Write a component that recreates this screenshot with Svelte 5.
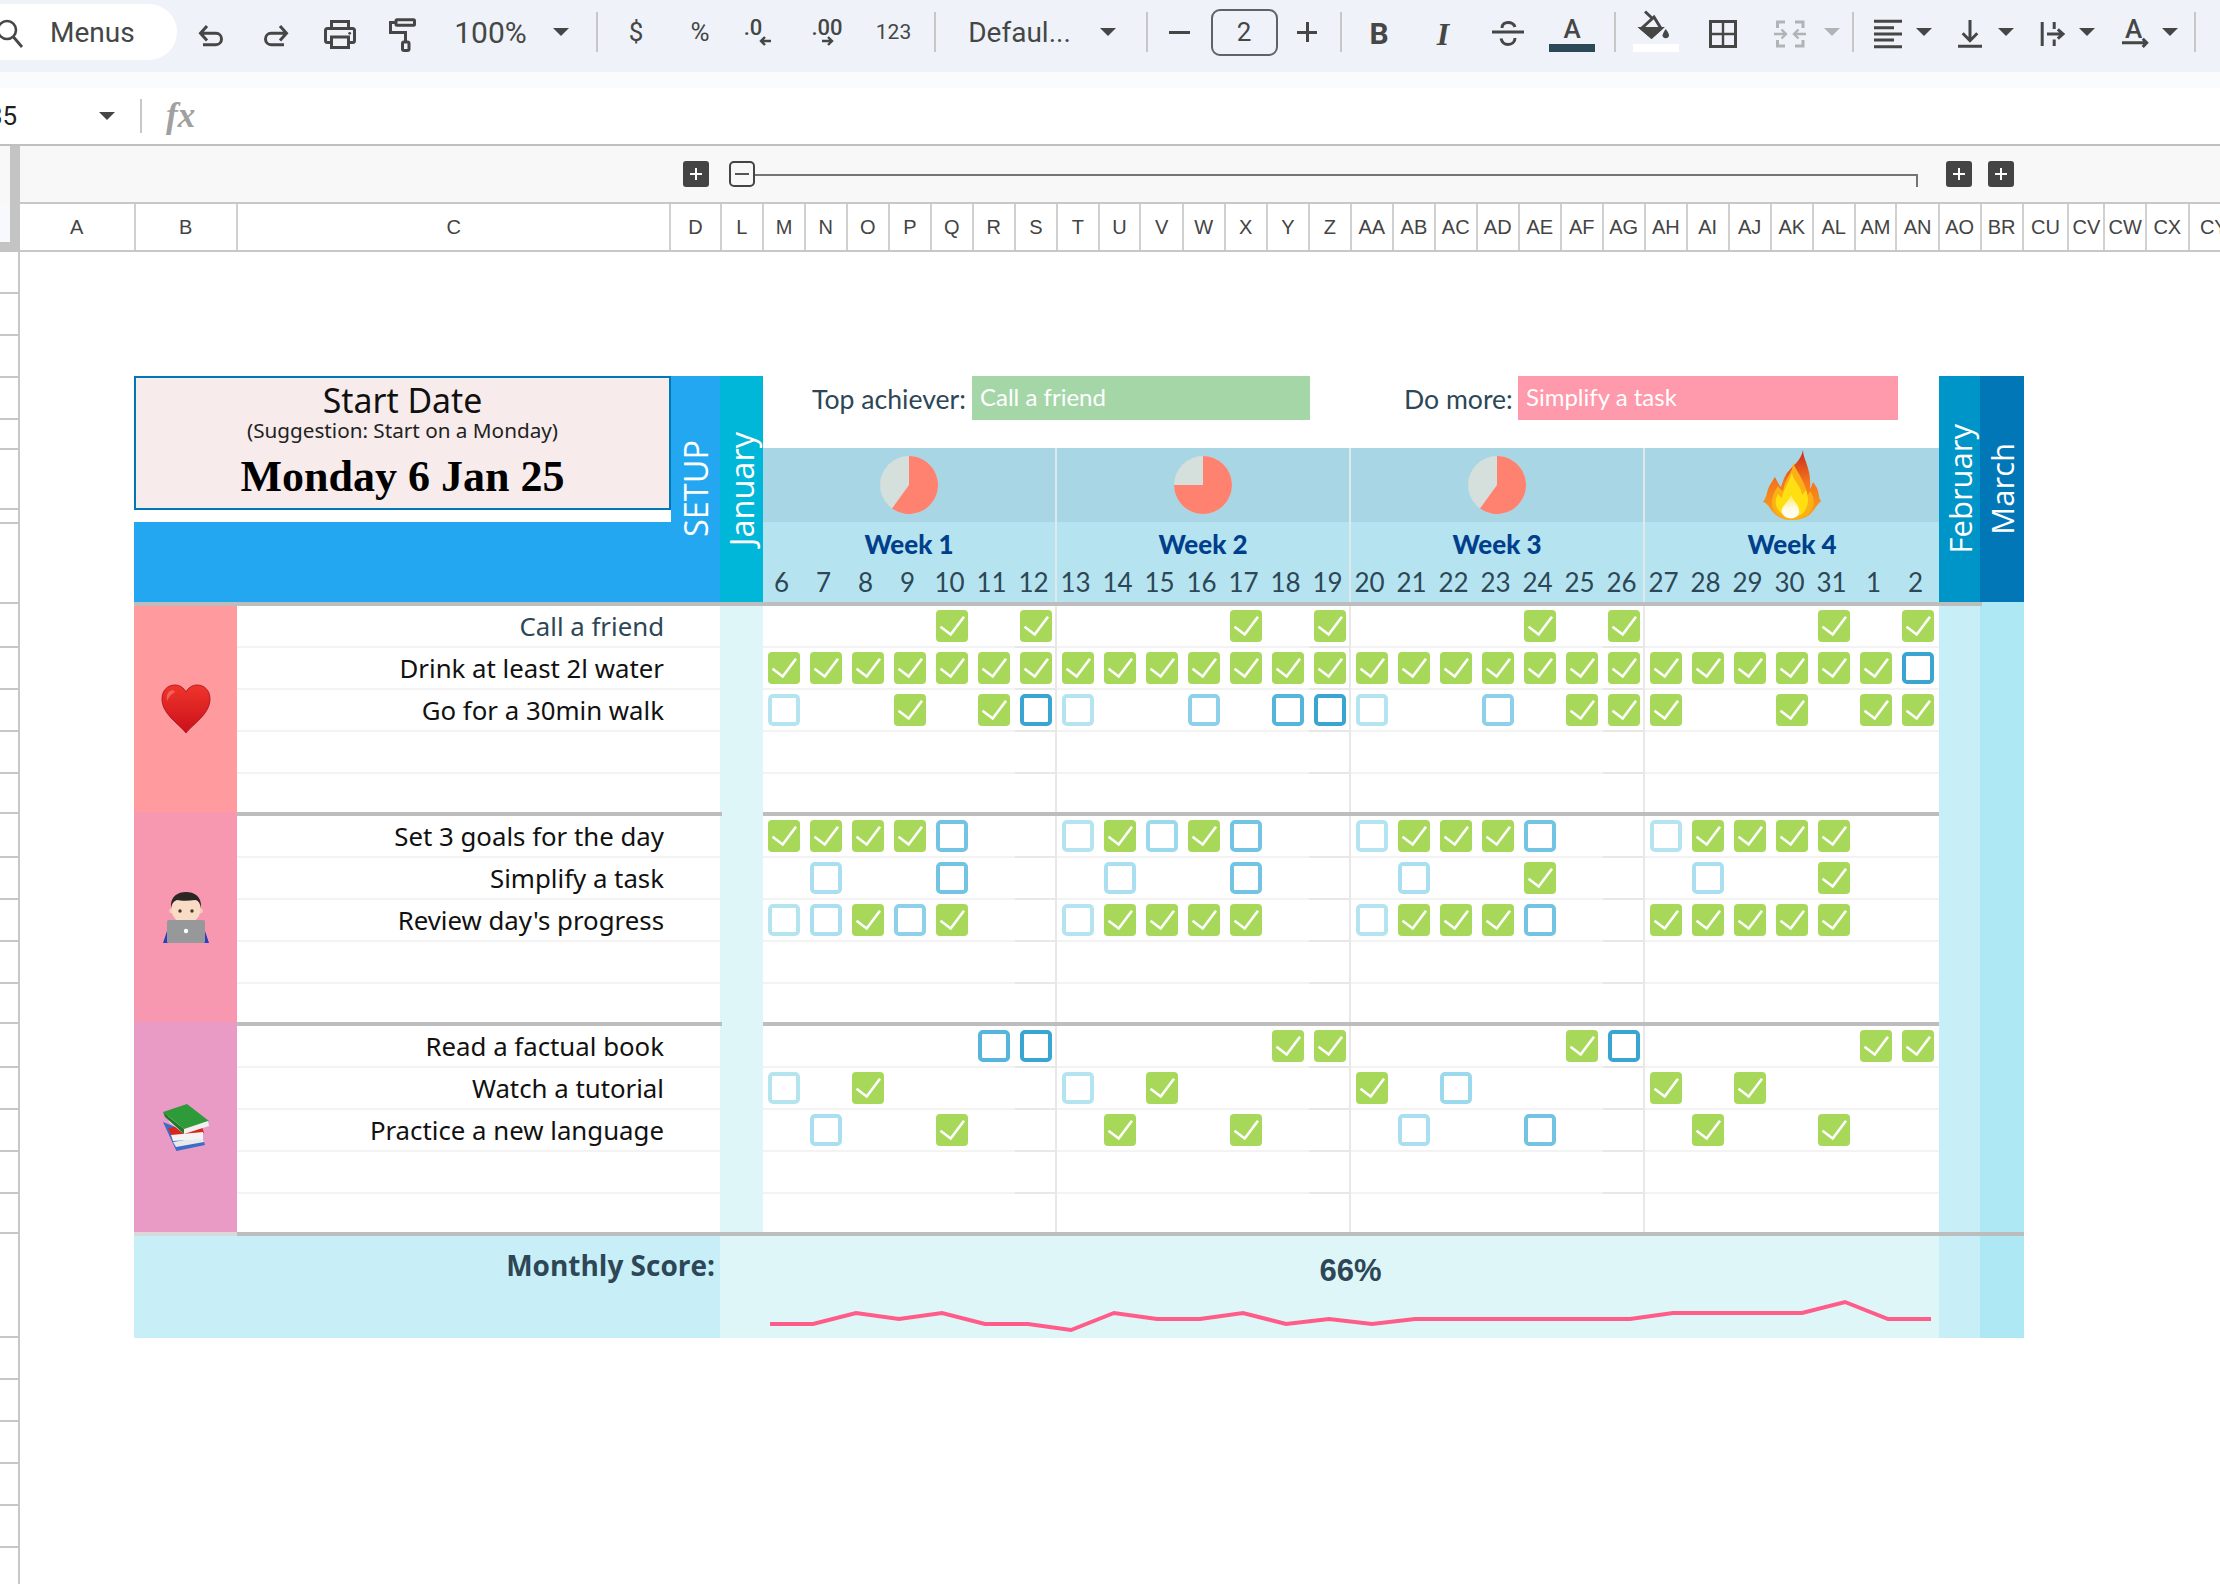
<script>
  const undoIco = '<path d="M18 12L11.5 19.3L18 26.5M12 19.3H27a5.5 5.7 0 0 1 0 11.4H14"/>';
  const redoIco = '<path d="M26 12L32.5 19.3L26 26.5M32 19.3H17a5.5 5.7 0 0 0 0 11.4H30"/>';
  const icons = {
    undo: undoIco,
    redo: redoIco,
    print: '<rect x="13.5" y="7.5" width="17" height="7"/><rect x="7.5" y="14.5" width="29" height="14" rx="2"/><rect x="13.5" y="23" width="17" height="10.5" fill="#eff3f9"/><circle cx="31.7" cy="19.3" r="1.4" fill="#444746" stroke="none"/>',
    paint: '<rect x="14" y="5.8" width="18.5" height="5.5" rx="1"/><path d="M13 8.5H8.5V18.5H23.5V28"/><rect x="20.5" y="28" width="6.5" height="8.5" rx="1.5"/>',
    dec: '<text x="16" y="21" class="ic-t">.0</text><path d="M34 27H24M28 23L24 27L28 31" stroke-width="2.4"/>',
    inc: '<text x="22" y="21" class="ic-t">.00</text><path d="M17 27H27M23 23L27 27L23 31" stroke-width="2.4"/>',
    bold: '<text x="22" y="29.5" class="ic-b">B</text>',
    ital: '<text x="22" y="31" class="ic-i">I</text>',
    strike: '<path d="M6 18H38M16 14C16 10 19 8.5 22 8.5C25 8.5 28 10 29 13M15 24.5C16 28.5 19 30.5 22 30.5C26 30.5 29 28 29 24"/>',
    color: '<text x="22" y="24" class="ic-a">A</text><rect x="-1" y="30" width="46" height="8" fill="#2e4a5a" stroke="none"/>',
    fill: '<path d="M21 3L8.5 14.5L18.5 23L28 14.5Z"/><path d="M8.5 14.5H28L18.5 23Z" fill="#444746"/><path d="M12 -2.5L20 5"/><path d="M32.7 15C35 18 36 20 36 21.5A3.3 3.3 0 0 1 29.5 21.5C29.5 20 31 17.5 32.7 15Z" fill="#444746" stroke="none"/><rect x="0" y="30" width="46" height="8" fill="#fff" stroke="none"/>',
    borders: '<rect x="9.5" y="7.5" width="25" height="25"/><path d="M22 8V32M10 20H34" stroke-width="2.4"/>',
    merge: '<g stroke="#b1b4b6"><path d="M17 8H9.5V14M27 8H35V14M17 32H9.5V26M27 32H35V26"/><path d="M6 20H18M13.5 15.5L18 20L13.5 24.5M38 20H26M30.5 15.5L26 20L30.5 24.5" stroke-width="2.4"/></g>',
    align: '<path d="M8 7.3H36M8 13.7H28M8 20H36M8 26H28M8 32.7H36"/>',
    valign: '<path d="M23 6V26.5M15.7 19.3L23 26.7L30.3 19.3M11 32.3H35"/>',
    wrap: '<path d="M12.2 8V32M24.2 8V15M24.2 25.5V32M17 20H33.5M27.8 15.3L33 20L27.8 24.7"/>',
    rotate: '<text x="21.5" y="24" class="ic-a">A</text><path d="M10 28.7H34M30.7 24.7L34.7 28.7L30.7 33"/>'
  };

  // x centres are read off the toolbar, the margins come from these
  const tools = [
    { cx: 211, k: 'undo' }, { cx: 276, k: 'redo' }, { cx: 340, k: 'print' }, { cx: 403.5, k: 'paint' },
    { cx: 490.5, t: '100%', c: 'big' }, { cx: 561, caret: 1 }, { cx: 597, div: 1 },
    { cx: 636, t: '$', c: 'mid' }, { cx: 700, t: '%', c: 'mid' }, { cx: 759, k: 'dec' }, { cx: 827, k: 'inc' },
    { cx: 893.5, t: '123', c: 'small' }, { cx: 934.5, div: 1 }, { cx: 1019.5, t: 'Defaul...', c: 'wide' },
    { cx: 1108, caret: 1 }, { cx: 1147, div: 1 }, { cx: 1179, minus: 1 }, { cx: 1244, size: 1 },
    { cx: 1307, plus: 1 }, { cx: 1341, div: 1 }, { cx: 1379, k: 'bold' }, { cx: 1443, k: 'ital' },
    { cx: 1508, k: 'strike' }, { cx: 1572, k: 'color' }, { cx: 1615, div: 1 }, { cx: 1655, k: 'fill' },
    { cx: 1723, k: 'borders' }, { cx: 1790, k: 'merge' }, { cx: 1832, caret: 2 }, { cx: 1853, div: 1 },
    { cx: 1888, k: 'align' }, { cx: 1924, caret: 1 }, { cx: 1969, k: 'valign' }, { cx: 2005.5, caret: 1 },
    { cx: 2051.5, k: 'wrap' }, { cx: 2087, caret: 1 }, { cx: 2134, k: 'rotate' }, { cx: 2170, caret: 1 },
    { cx: 2194.5, div: 1 }
  ];

  const colEdges = [20, 135.5, 238, 671.4, 721.7, 764, 806, 847.7, 890, 932, 973.7, 1016, 1058, 1099.7, 1141.4, 1184, 1225.7, 1268, 1310, 1351.7, 1394, 1436, 1477.7, 1520, 1562, 1603.7, 1646, 1688, 1729.7, 1772, 1814, 1855.7, 1897.5, 1940, 1981.7, 2024, 2069.5, 2105.6, 2147, 2190, 2240];
  const colNames = ['A','B','C','D','L','M','N','O','P','Q','R','S','T','U','V','W','X','Y','Z','AA','AB','AC','AD','AE','AF','AG','AH','AI','AJ','AK','AL','AM','AN','AO','BR','CU','CV','CW','CX','CY'];
  const columns = colNames.map((n, i) => ({ n, w: colEdges[i + 1] - colEdges[i] }));

  const rowLines = [294, 336, 378, 420, 450, 510, 524, 604, 648, 690, 732, 774, 814, 858, 900, 942, 984, 1024, 1068, 1110, 1152, 1194, 1234, 1338, 1380, 1422, 1464, 1506, 1548, 1590];
  const rowHeads = rowLines.map((y, i) => y - (i ? rowLines[i - 1] : 252));

  const weeks = [
    { name: 'Week 1', days: [6, 7, 8, 9, 10, 11, 12], pie: 0.6 },
    { name: 'Week 2', days: [13, 14, 15, 16, 17, 18, 19], pie: 0.75 },
    { name: 'Week 3', days: [20, 21, 22, 23, 24, 25, 26], pie: 0.6 },
    { name: 'Week 4', days: [27, 28, 29, 30, 31, 1, 2], fire: true }
  ];

  function piePath(p) {
    const a = p * 2 * Math.PI;
    const x = 29 + 29 * Math.sin(a);
    const y = 29 - 29 * Math.cos(a);
    return `M29 29L29 0A29 29 0 ${p > 0.5 ? 1 : 0} 1 ${x.toFixed(1)} ${y.toFixed(1)}Z`;
  }

  const groups = [
    {
      color: '#ff9a9f', icon: 'heart',
      rows: [
        { label: 'Call a friend', cells: '....x.x....x.x....x.x....x.x', soft: true },
        { label: 'Drink at least 2l water', cells: 'xxxxxxxxxxxxxxxxxxxxxxxxxxxo' },
        { label: 'Go for a 30min walk', cells: 'o..x.xoo..o.ooo..o.xxx..x.xx' },
        { label: '', cells: '' }, { label: '', cells: '' }
      ]
    },
    {
      color: '#f797b0', icon: 'man',
      rows: [
        { label: 'Set 3 goals for the day', cells: 'xxxxo..oxoxo..oxxxo..oxxxx..' },
        { label: 'Simplify a task', cells: '.o..o...o..o...o..x...o..x..' },
        { label: "Review day's progress", cells: 'ooxox..oxxxx..oxxxo..xxxxx..' },
        { label: '', cells: '' }, { label: '', cells: '' }
      ]
    },
    {
      color: '#e99bc6', icon: 'books',
      rows: [
        { label: 'Read a factual book', cells: '.....oo.....xx.....xo.....xx' },
        { label: 'Watch a tutorial', cells: 'o.x....o.x....x.o....x.x....' },
        { label: 'Practice a new language', cells: '.o..x...x..x...o..o...x..x..' },
        { label: '', cells: '' }, { label: '', cells: '' }
      ]
    }
  ];

  const dayIdx = Array.from({ length: 28 }, (_, i) => i);

  const scoreY = [1324, 1324, 1313, 1319, 1313, 1324, 1324, 1330, 1313, 1319, 1319, 1313, 1324, 1319, 1324, 1319, 1319, 1319, 1319, 1319, 1319, 1313, 1313, 1313, 1313, 1302, 1319, 1319];
  const sparkPts = scoreY.map((y, i) => `${7 + 43 * i},${y - 1296}`).join(' ');
</script>

<div class="page">
  <div class="toolbar">
    <div class="pill">
      <svg class="lens" width="30" height="34" viewBox="0 0 30 34"><circle cx="8" cy="13" r="9" fill="none" stroke="#444746" stroke-width="2.6"/><path d="M14.5 20L23 30" stroke="#444746" stroke-width="2.8" fill="none"/></svg>
      <span class="menus">Menus</span>
    </div>
    {#each tools as tool, i}
      <div class="tool" style="margin-left:{tool.cx - (i ? tools[i - 1].cx : 177)}px">
        {#if tool.k}
          <svg class="ico" width="44" height="44" viewBox="0 -4 44 44">{@html icons[tool.k]}</svg>
        {:else if tool.t}
          <span class={tool.c}>{tool.t}</span>
        {:else if tool.caret}
          <svg class="caret" width="16" height="8" viewBox="0 0 16 8"><path d="M0 0H16L8 8Z" fill={tool.caret === 2 ? '#b1b4b6' : '#444746'}/></svg>
        {:else if tool.div}
          <span class="divider"></span>
        {:else if tool.minus}
          <span class="dash"></span>
        {:else if tool.plus}
          <span class="cross"></span>
        {:else if tool.size}
          <span class="sizebox">2</span>
        {/if}
      </div>
    {/each}
  </div>
  <div class="strip"></div>

  <div class="fbar">
    <span class="ref">35</span>
    <svg class="caret" width="16" height="8" viewBox="0 0 16 8"><path d="M0 0H16L8 8Z" fill="#444746"/></svg>
    <span class="fdiv"></span>
    <span class="fx">fx</span>
  </div>

  <div class="sheet-top">
    <div class="corner">
      <div class="corner-a"></div>
      <div class="corner-b"></div>
      <div class="corner-c"></div>
    </div>
    <div class="heads">
      <div class="group-row">
        <span class="gbtn"></span>
        <span class="gbtn open"></span>
        <span class="gline"></span>
        <span class="gbtn g3"></span>
        <span class="gbtn g4"></span>
      </div>
      <div class="col-row">
        {#each columns as col}
          <div class="col" style="width:{col.w}px">{col.n}</div>
        {/each}
      </div>
    </div>
  </div>

  <div class="main">
    <div class="rownums">
      {#each rowHeads as h}
        <div class="rownum" style="height:{h}px"></div>
      {/each}
    </div>

    <div class="canvas">
      <div class="tracker">
        <div class="head">
          <div class="setup-left">
            <div class="start">
              <div class="st-title">Start Date</div>
              <div class="st-sub">(Suggestion: Start on a Monday)</div>
              <div class="st-date">Monday 6 Jan 25</div>
            </div>
            <div class="blue-band"></div>
          </div>
          <div class="vcol setup"><span>SETUP</span></div>
          <div class="vcol jan"><span>January</span></div>
          <div class="weeks">
            <div class="ach">
              <span class="ach-l first">Top achiever:</span>
              <span class="ach-b good">Call a friend</span>
              <span class="ach-l second">Do more:</span>
              <span class="ach-b bad">Simplify a task</span>
            </div>
            <div class="week-cols">
              {#each weeks as w}
                <div class="week">
                  <div class="pie-cell">
                    {#if w.fire}
                      <svg width="58" height="72" viewBox="0 0 58 72">
                        <defs>
                          <linearGradient id="fo" x1="0" y1="0" x2="0" y2="1"><stop offset="0" stop-color="#c9281c"/><stop offset="0.45" stop-color="#f4741c"/><stop offset="1" stop-color="#f9a61a"/></linearGradient>
                          <linearGradient id="fw" x1="0" y1="0" x2="0" y2="1"><stop offset="0" stop-color="#ffe95a"/><stop offset="0.55" stop-color="#fffbe0"/><stop offset="1" stop-color="#ffffff"/></linearGradient>
                        </defs>
                        <path fill="url(#fo)" d="M40 1C38 12 30 16 24 24C20 30 19 36 18 38C16 36 14 32 12 28C8 34 5 38 4 44C3 48 2 50 0 53C4 54 6 58 9 62C14 68 20 71 29 71C38 71 46 68 50 62C53 58 55 55 58 52C56 50 56 46 55 42C54 38 52 36 50 33C49 36 48 38 47 40C48 30 46 22 44 16C42 10 40 6 40 1Z"/>
                        <path fill="#fbb016" d="M30 14C30 24 22 28 20 42C18 41 16 39 15 37C10 44 7 52 10 60C15 69 24 71 29 71C38 71 46 67 50 58C52 52 50 46 47 42C46 44 45 46 44 47C44 36 36 26 30 14Z"/>
                        <path fill="#ffdf12" d="M29 24C30 32 38 36 39 46C41 44 42 42 43 41C46 48 46 58 40 64C36 69 22 69 17 63C11 57 12 50 15 45C17 47 18 49 19 49C20 40 26 34 29 24Z"/>
                        <path fill="url(#fw)" d="M28 46C30 52 37 56 36 64C34 71 22 71 19 64C17 58 25 54 28 46Z"/>
                      </svg>
                    {:else}
                      <svg width="58" height="58" viewBox="0 0 58 58">
                        <circle cx="29" cy="29" r="29" fill="#d5dfdb"/>
                        <path d={piePath(w.pie)} fill="#ff8170"/>
                      </svg>
                    {/if}
                  </div>
                  <div class="week-cell">
                    <div class="week-name">{w.name}</div>
                    <div class="dates">
                      {#each w.days as d}
                        <span class="date">{d}</span>
                      {/each}
                    </div>
                  </div>
                </div>
              {/each}
            </div>
          </div>
          <div class="vcol feb"><span>February</span></div>
          <div class="vcol mar"><span>March</span></div>
        </div>

        <div class="rule first-rule"><span class="rule-line"></span><span class="rule-end"></span></div>

        <div class="body">
          <div class="groups">
            {#each groups as g, gi}
              <div class="group">
                <div class="ico-cell" style="background:{g.color}">
                  {#if g.icon === 'heart'}
                    <svg width="50" height="50" viewBox="0 0 50 50">
                      <defs><linearGradient id="hg" x1="0" y1="0" x2="0" y2="1"><stop offset="0" stop-color="#f0352c"/><stop offset="1" stop-color="#c9101a"/></linearGradient></defs>
                      <path fill="url(#hg)" stroke="#a50d16" stroke-width="0.8" d="M25 49C18 40 1 30 1 15C1 6 7 1 14 1C19 1 23 4 25 8C27 4 31 1 36 1C43 1 49 6 49 15C49 30 32 40 25 49Z"/>
                      <path fill="#ff8a80" opacity="0.55" d="M9 7C6 9 5 13 6 17C8 13 10 10 14 8C13 6 11 6 9 7Z"/>
                    </svg>
                  {:else if g.icon === 'man'}
                    <svg width="46" height="51" viewBox="0 0 46 51">
                      <path fill="#2a3fc0" d="M0 51L5 36L9 33H37L41 36L46 51Z"/>
                      <circle cx="8.5" cy="19" r="2.4" fill="#f3cfb4"/>
                      <circle cx="37.5" cy="19" r="2.4" fill="#f3cfb4"/>
                      <ellipse cx="23" cy="17" rx="14.5" ry="15" fill="#f8dcc5"/>
                      <path fill="#2b2624" d="M8 16C7 4 15 0 23 0C31 0 39 4 38 16C37 11 35 8 32 8C26 9 18 9 14 8C11 9 9 11 8 16Z"/>
                      <circle cx="17" cy="19" r="1.7" fill="#4a3425"/>
                      <circle cx="29" cy="19" r="1.7" fill="#4a3425"/>
                      <rect x="4" y="28" width="38" height="23" rx="1.5" fill="#97989a"/>
                      <circle cx="23" cy="39" r="2.2" fill="#fff"/>
                    </svg>
                  {:else}
                    <svg width="46" height="47" viewBox="0 0 46 47">
                      <path fill="#3a6cc8" d="M0 18L13.4 47L42 41L40 34L10 22Z"/>
                      <path fill="#e9e9e9" d="M10 38L40 33L41 38L13 43Z"/>
                      <path fill="#d8261c" d="M5 24L38 19L41 29L10 35Z"/>
                      <path fill="#f4f4f4" d="M8 31L40 28L40 35L10 37Z"/>
                      <path fill="#2f9a3a" d="M0 8L24 0L46 17L21 25Z"/>
                      <path fill="#f1f1f1" d="M5 12L21 25L45 17L46 22L21 30L6 18Z"/>
                      <path fill="#1f7a2c" d="M0 8L21 25L21 30L2 13Z"/>
                    </svg>
                  {/if}
                </div>
                <div class="g-main">
                  {#if gi > 0}
                    <div class="sep"><span class="sep-a"></span><span class="sep-b"></span></div>
                  {/if}
                  {#each g.rows as r, ri}
                    <div class="row" class:last={ri === 4}>
                      <div class="label" class:soft={r.soft}>{r.label}</div>
                      <div class="band"></div>
                      <div class="cells">
                        {#each dayIdx as d}
                          <div class="cell" class:wk-end={d % 7 === 6 && d < 27}>
                            {#if r.cells[d] === 'x'}
                              <svg class="tick" width="32" height="32" viewBox="0 0 32 32"><rect width="32" height="32" rx="4" fill="#a8d85a"/><path d="M4.5 16.7L14.7 24.5L28 6.7" fill="none" stroke="#fff" stroke-width="2.6"/></svg>
                            {:else if r.cells[d] === 'o'}
                              <span class="box d{d % 7}"></span>
                            {/if}
                          </div>
                        {/each}
                      </div>
                    </div>
                  {/each}
                </div>
              </div>
            {/each}
          </div>
          <div class="side s-feb"></div>
          <div class="side s-mar"></div>
        </div>

        <div class="rule foot-rule"><span class="fr-a"></span><span class="fr-b"></span></div>

        <div class="foot">
          <div class="foot-l">Monthly Score:</div>
          <div class="foot-m">
            <div class="pct">66%</div>
            <svg class="spark" width="1175" height="40" viewBox="0 0 1175 40"><polyline points={sparkPts} fill="none" stroke="#ff5c8a" stroke-width="4"/></svg>
          </div>
          <div class="side-f f1"></div>
          <div class="side-f f2"></div>
        </div>
      </div>
    </div>
  </div>
</div>

<style>
  :global(body) { margin: 0; background: #fff; }
  .page { width: 2220px; height: 1584px; overflow: hidden; background: #fff; font-family: Roboto, sans-serif; color: #444746; }

  .toolbar { height: 72px; background: #eff3f9; display: flex; align-items: center; padding-bottom: 8px; box-sizing: border-box; position: relative; overflow: hidden; }
  .pill { flex: none; width: 177px; height: 56px; background: #fff; border-radius: 0 28px 28px 0; display: flex; align-items: center; box-sizing: border-box; margin-top: 0; }
  .lens { flex: none; margin-left: -1px; margin-top: 4px; }
  .menus { margin-left: 21px; font-size: 28px; }
  .tool { flex: none; width: 0; display: flex; justify-content: center; align-items: center; white-space: nowrap; }
  .ico { flex: none; overflow: visible; fill: none; stroke: #444746; stroke-width: 3; }
  .ico :global(.ic-t) { font: 500 22px Roboto, sans-serif; fill: #444746; stroke: none; text-anchor: middle; }
  .ico :global(.ic-b) { font: 700 30px Roboto, sans-serif; fill: #444746; stroke: none; text-anchor: middle; }
  .ico :global(.ic-i) { font: italic 700 32px "Liberation Serif", serif; fill: #444746; stroke: none; text-anchor: middle; }
  .ico :global(.ic-a) { font: 500 26px Roboto, sans-serif; fill: #444746; stroke: none; text-anchor: middle; }
  .big { font-size: 30px; }
  .mid { font-size: 26px; }
  .wide { font-size: 28px; }
  .small { font-size: 21px; }
  .caret { flex: none; }
  .divider { flex: none; width: 2px; height: 40px; background: #c7c7c7; }
  .dash { flex: none; width: 21px; height: 3px; background: #444746; }
  .cross { flex: none; width: 20px; height: 20px; background: linear-gradient(#444746, #444746) center / 100% 3px no-repeat, linear-gradient(#444746, #444746) center / 3px 100% no-repeat; }
  .sizebox { flex: none; width: 67px; height: 47px; box-sizing: border-box; border: 2px solid #5f6368; border-radius: 9px; display: flex; align-items: center; justify-content: center; font-size: 26px; }

  .strip { height: 16px; background: #f9fbfd; }

  .fbar { height: 56px; display: flex; align-items: center; overflow: hidden; }
  .ref { margin-left: -12px; width: 111px; flex: none; font-size: 26px; color: #1f1f1f; }
  .fdiv { flex: none; width: 2px; height: 34px; background: #c7c7c7; margin-left: 25px; }
  .fx { margin-left: 24px; font: italic 700 35px "Liberation Serif", serif; color: #a0a0a0; }

  .sheet-top { display: flex; height: 106px; border-top: 2px solid #c0c0c0; box-sizing: content-box; }
  .corner { flex: none; width: 20px; display: flex; flex-wrap: wrap; align-content: flex-start; background: #c4c4c4; }
  .corner-a { width: 10px; height: 58px; background: #f8f8f8; }
  .corner-b { width: 10px; height: 58px; background: #c4c4c4; }
  .corner-c { width: 10px; height: 38px; background: #f7f9fc; margin-top: 0; }
  .heads { flex: 1; min-width: 0; overflow: hidden; }
  .group-row { height: 56px; background: #f8f8f8; border-bottom: 2px solid #c7c7c7; display: flex; align-items: center; padding-left: 663px; box-sizing: content-box; }
  .gbtn { flex: none; width: 26px; height: 26px; border-radius: 3px; background: #444 linear-gradient(#fff, #fff) center / 12px 2px no-repeat; position: relative; }
  .gbtn:not(.open)::after { content: ""; position: absolute; left: 12px; top: 7px; width: 2px; height: 12px; background: #fff; }
  .gbtn.open { background: #f8f8f8 linear-gradient(#555, #555) center / 14px 2px no-repeat; box-sizing: border-box; border: 2px solid #444; border-radius: 5px; margin-left: 20px; }
  .gline { flex: none; width: 1163px; height: 13px; border-top: 2px solid #757575; border-right: 2px solid #757575; box-sizing: border-box; margin-top: 13px; }
  .gbtn.g3 { margin-left: 28px; }
  .gbtn.g4 { margin-left: 16px; }
  .col-row { height: 46px; display: flex; border-bottom: 2px solid #c7c7c7; box-sizing: content-box; }
  .col { flex: none; box-sizing: border-box; border-right: 2px solid #d0d0d0; text-align: center; font: 20px/46px "Liberation Sans", sans-serif; color: #444; white-space: nowrap; overflow: hidden; }

  .main { display: flex; height: 1332px; }
  .rownums { flex: none; width: 20px; box-sizing: border-box; border-right: 2px solid #c7c7c7; }
  .rownum { box-sizing: border-box; border-bottom: 2px solid #c7c7c7; }
  .canvas { flex: 1; padding: 124px 0 0 114px; font-family: Lato, sans-serif; }
  .tracker { width: 1890px; }

  .head { display: flex; height: 226px; }
  .setup-left { flex: none; width: 537px; display: flex; flex-direction: column; }
  .start { height: 134px; box-sizing: border-box; border: 2px solid #0277b5; background: #f7eceb; color: #000; text-align: center; }
  .st-title { font: 33.8px/36px "Noto Sans", sans-serif; margin-top: 4px; color: #111; }
  .st-sub { font: 20.7px/24px "Noto Sans", sans-serif; color: #222; }
  .st-date { font: 700 44px/50px "Liberation Serif", serif; margin-top: 10px; }
  .blue-band { margin-top: 12px; height: 80px; background: #23a7f1; }
  .vcol { flex: none; display: flex; align-items: center; justify-content: center; color: #fff; font: 32.5px "Open Sans", sans-serif; }
  .vcol span { writing-mode: vertical-rl; transform: rotate(180deg); white-space: nowrap; }
  .setup { width: 49px; background: #23a7f1; }
  .jan { width: 43px; background: #00b6d9; }
  .feb { width: 41px; background: #0095c8; font-size: 31px; }
  .mar { width: 44px; background: #0277b7; font-size: 31px; }

  .weeks { flex: none; width: 1176px; }
  .ach { height: 72px; display: flex; align-items: flex-start; padding-left: 49px; color: #2d4756; font-size: 26.6px; }
  .ach-l { line-height: 46px; flex: none; }
  .ach-l.first { width: 160px; }
  .ach-l.second { width: 114px; margin-left: 94px; }
  .ach-b { height: 44px; line-height: 42px; flex: none; color: #fff; box-sizing: border-box; padding-left: 8px; font-size: 24px; }
  .good { width: 338px; background: #a5d6a7; }
  .bad { width: 380px; background: #ff99ac; }
  .week-cols { display: flex; }
  .week { flex: none; width: 294px; box-shadow: inset -2px 0 #dfe8ea; position: relative; }
  .week:last-child { box-shadow: none; }
  .pie-cell { height: 74px; background: #a9d6e5; display: flex; align-items: center; justify-content: center; margin-right: 2px; }
  .week:last-child .pie-cell { margin-right: 0; }
  .week-cell { height: 80px; background: #b5e4f0; margin-right: 2px; }
  .week:last-child .week-cell { margin-right: 0; }
  .week-name { text-align: center; font: 900 26px/44px Lato, sans-serif; color: #013f8c; }
  .dates { display: flex; }
  .date { flex: none; width: 42px; box-sizing: border-box; padding-right: 5px; text-align: center; font-size: 26px; line-height: 32px; color: #2d4756; }

  .rule { display: flex; height: 4px; }
  .rule-line { flex: none; width: 1848px; background: #bdbdbd; }
  .rule-end { flex: none; width: 42px; background: #aee8f4; }
  .fr-a { flex: none; width: 103px; background: #d9d9d9; }
  .fr-b { flex: 1; background: #bdbdbd; }

  .body { display: flex; }
  .groups { flex: none; width: 1805px; }
  .group { display: flex; }
  .ico-cell { flex: none; width: 103px; display: flex; align-items: center; justify-content: center; }
  .g-main { flex: none; width: 1702px; }
  .sep { display: flex; height: 4px; background: #dff6f9; }
  .sep-a { flex: none; width: 485px; background: #bdbdbd; }
  .sep-b { flex: none; width: 1176px; margin-left: 41px; background: #bdbdbd; }
  .row { display: flex; height: 42px; }
  .row.last { height: 38px; }
  .label { flex: none; width: 483px; box-sizing: border-box; padding-right: 56px; text-align: right; font: 25.8px/40px "Noto Sans", sans-serif; color: #111; border-bottom: 2px solid #f3f3f3; white-space: nowrap; }
  .label.soft { color: #2d4756; }
  .band { flex: none; width: 43px; background: #dff6f9; }
  .cells { flex: none; width: 1176px; display: flex; border-bottom: 2px solid #f3f3f3; box-sizing: border-box; }
  .row.last .label, .row.last .cells { border-bottom: none; }
  .cell { flex: none; width: 42px; display: flex; align-items: center; justify-content: center; }
  .cell.wk-end { box-shadow: inset -2px 0 #e8e8e8, 0 2px #e8e8e8; }
  .tick { flex: none; }
  .box { flex: none; width: 32px; height: 32px; box-sizing: border-box; border: 4px solid #b5e4f1; border-radius: 5px; background: #fff; }
  .d0 { border-color: #b5e4f1; }
  .d1 { border-color: #a9dff0; }
  .d2 { border-color: #9cd9ed; }
  .d3 { border-color: #8cd1e9; }
  .d4 { border-color: #72c4e2; }
  .d5 { border-color: #56b5da; }
  .d6 { border-color: #3ba5d2; }
  .side { flex: none; }
  .s-feb { width: 41px; background: #c8eff8; margin-left: 0; }
  .s-mar { width: 44px; background: #aee8f4; }

  .foot { display: flex; height: 102px; }
  .foot-l { flex: none; width: 586px; box-sizing: border-box; background: #c8eff8; padding: 13px 5px 0 0; text-align: right; font: 700 28px/32px "Open Sans", sans-serif; color: #2d4756; }
  .foot-m { flex: none; width: 1219px; box-sizing: border-box; padding: 14px 0 0 43px; background: #dff6f9; }
  .pct { width: 1175px; text-align: center; font: 700 31px/42px "Liberation Sans", sans-serif; color: #2d4756; }
  .spark { display: block; margin-top: 4px; }
  .f1 { flex: none; width: 41px; background: #c8eff8; }
  .f2 { flex: none; width: 44px; background: #aee8f4; }
</style>
